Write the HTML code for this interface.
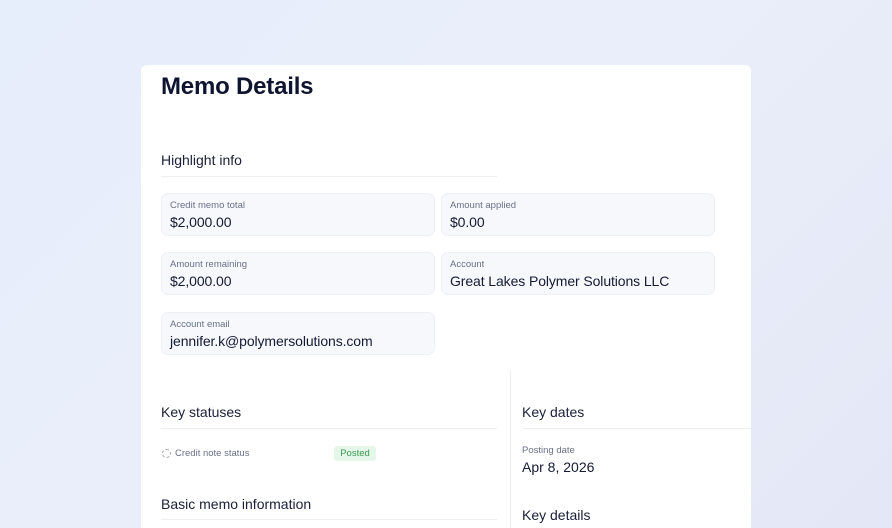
<!DOCTYPE html>
<html><head><style>
*{margin:0;padding:0;box-sizing:border-box}
html,body{width:892px;height:528px;overflow:hidden}
body{background:linear-gradient(135deg,#e6edfb 0%,#eaeefa 50%,#e4e7f5 100%);font-family:"Liberation Sans",sans-serif;color:#141a33;position:relative}
.card{position:absolute;left:141px;top:65px;width:610px;height:463px;background:#fff;border-radius:6px 6px 0 0;overflow:hidden}
.a{position:absolute}
h1{position:absolute;left:20px;top:8px;font-size:24px;font-weight:bold;color:#0f1430;letter-spacing:-0.2px}
.h{position:absolute;font-size:14px;color:#1a1f38}
.line{position:absolute;height:1px;background:#eceef3}
.box{position:absolute;background:#f6f8fc;border:1px solid #eef0f5;border-radius:7px;height:43px}
.box .l{position:absolute;left:8px;top:6px;font-size:9.5px;color:#6b7186}
.box .v{position:absolute;left:8px;top:20px;font-size:14px;color:#141a33;letter-spacing:-0.1px}
</style></head><body>
<div class="card">
<h1>Memo Details</h1>
<div class="h" style="left:20px;top:87px">Highlight info</div>
<div class="line" style="left:20px;top:111px;width:336px"></div>
<div class="box" style="left:20px;top:128px;width:274px"><div class="l">Credit memo total</div><div class="v">$2,000.00</div></div>
<div class="box" style="left:300px;top:128px;width:274px"><div class="l">Amount applied</div><div class="v">$0.00</div></div>
<div class="box" style="left:20px;top:187px;width:274px"><div class="l">Amount remaining</div><div class="v">$2,000.00</div></div>
<div class="box" style="left:300px;top:187px;width:274px"><div class="l">Account</div><div class="v">Great Lakes Polymer Solutions LLC</div></div>
<div class="box" style="left:20px;top:247px;width:274px"><div class="l">Account email</div><div class="v">jennifer.k@polymersolutions.com</div></div>
<div class="a" style="left:369px;top:305px;width:1px;height:200px;background:#eceef3"></div>
<div class="h" style="left:20px;top:339px">Key statuses</div>
<div class="line" style="left:20px;top:363px;width:336px"></div>
<div class="a" style="left:21px;top:384px;width:9px;height:9px;border:1px dashed #9aa0b0;border-radius:50%"></div>
<div class="a" style="left:34px;top:383px;font-size:9.5px;color:#6b7186">Credit note status</div>
<div class="a" style="left:193px;top:381px;width:42px;height:15px;background:#e5f7e8;border-radius:3px;color:#3a9a52;font-size:9.5px;text-align:center;line-height:15px">Posted</div>
<div class="h" style="left:20px;top:431px">Basic memo information</div>
<div class="line" style="left:20px;top:454px;width:336px"></div>
<div class="h" style="left:381px;top:339px">Key dates</div>
<div class="line" style="left:381px;top:363px;width:229px"></div>
<div class="a" style="left:381px;top:380px;font-size:9.5px;color:#6b7186">Posting date</div>
<div class="a" style="left:381px;top:394px;font-size:14px">Apr 8, 2026</div>
<div class="h" style="left:381px;top:442px">Key details</div>
</div>
</body></html>
